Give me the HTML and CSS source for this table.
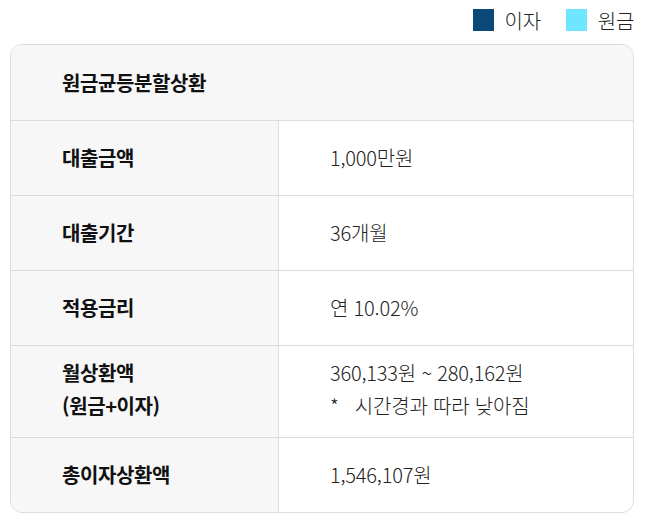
FILE: index.html
```html
<!DOCTYPE html>
<html lang="ko">
<head>
<meta charset="utf-8">
<link rel="stylesheet" href="styles.css">
</head>
<body>
<div class="legend">
  <span class="legend-item"><span class="swatch swatch-interest"></span>이자</span>
  <span class="legend-item"><span class="swatch swatch-principal"></span>원금</span>
</div>
<div class="card">
  <div class="card-head">원금균등분할상환</div>
  <div class="row">
    <div class="label"><span>대출금액</span></div>
    <div class="value"><span>1,000만원</span></div>
  </div>
  <div class="row">
    <div class="label"><span>대출기간</span></div>
    <div class="value"><span>36개월</span></div>
  </div>
  <div class="row">
    <div class="label"><span>적용금리</span></div>
    <div class="value"><span>연 10.02%</span></div>
  </div>
  <div class="row row-tall">
    <div class="label"><span>월상환액</span><span>(원금+이자)</span></div>
    <div class="value"><span>360,133원 ~ 280,162원</span><span class="note">*&nbsp;&nbsp; 시간경과 따라 낮아짐</span></div>
  </div>
  <div class="row row-last">
    <div class="label"><span>총이자상환액</span></div>
    <div class="value"><span>1,546,107원</span></div>
  </div>
</div>
</body>
</html>
```

FILE: styles.css
```css
* { box-sizing: border-box; }
body {
  margin: 0;
  background: #fff;
  font-family: "Noto Sans CJK KR", "Noto Sans", sans-serif;
  color: #111;
}
.legend {
  height: 44px;
  display: flex;
  justify-content: flex-end;
  align-items: center;
  gap: 25px;
  padding: 0 12px 4px 0;
}
.legend-item {
  display: flex;
  align-items: center;
  gap: 11px;
  font-size: 20px;
  font-weight: 300;
  color: #222;
  letter-spacing: -0.3px;
}
.swatch {
  display: inline-block;
  width: 21px;
  height: 22px;
}
.swatch-interest { background: #0b4a78; }
.swatch-principal { background: #6ee6ff; }
.card {
  margin: 0 12px 0 10px;
  border: 1px solid #dcdcdc;
  border-radius: 12px;
  overflow: hidden;
}
.card-head {
  height: 76px;
  background: #f7f7f8;
  border-bottom: 1px solid #dcdcdc;
  padding-left: 51px;
  display: flex;
  align-items: center;
  font-size: 20px;
  font-weight: 700;
  letter-spacing: -0.4px;
}
.row {
  display: grid;
  grid-template-columns: 268px 1fr;
  height: 75px;
  border-bottom: 1px solid #dcdcdc;
}
.row-tall { height: 92px; }
.row-tall .label, .row-tall .value { padding-bottom: 6px; }
.row-last { border-bottom: none; height: 74px; }
.label {
  background: #f7f7f8;
  border-right: 1px solid #dcdcdc;
  padding-left: 51px;
  padding-bottom: 2px;
  display: flex;
  flex-direction: column;
  justify-content: center;
  font-size: 20px;
  font-weight: 700;
  line-height: 33px;
  letter-spacing: -0.4px;
  color: #111;
}
.value {
  padding-left: 51px;
  padding-bottom: 2px;
  display: flex;
  flex-direction: column;
  justify-content: center;
  font-size: 20px;
  font-weight: 300;
  line-height: 33px;
  letter-spacing: -0.2px;
  color: #222;
}
.note { white-space: pre; }
```
